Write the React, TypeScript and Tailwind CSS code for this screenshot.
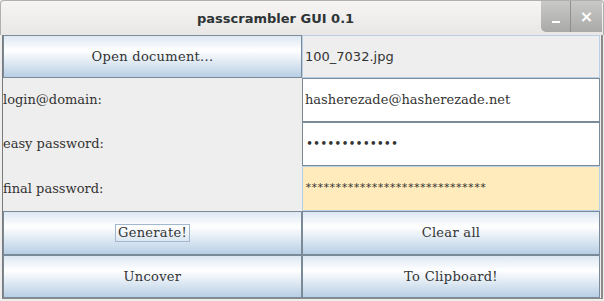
import React from "react";

const btn =
  "flex items-center justify-center border border-[#7a8a99] bg-[linear-gradient(to_bottom,#dde8f3_0%,#ffffff_35%,#b8cfe5_100%)] text-[#333] text-[13px] tracking-[0.3px]";

const App = () => {
  return (
    <div className="w-[604px] h-[301px] bg-[#eeeeee] overflow-hidden" style={{ fontFamily: "'DejaVu Serif', serif" }}>
      {/* title bar */}
      <div className="relative h-[35px] border border-[#b0b0b0] border-b-0 rounded-t-[4px] bg-[linear-gradient(to_bottom,#f6f5f4,#e8e7e6)] flex items-center pl-[196px]">
        <span className="text-[13px] font-bold text-[#2e3436] mt-[2px]" style={{ fontFamily: "'DejaVu Sans', sans-serif" }}>
          passcrambler GUI 0.1
        </span>
        <div className="absolute right-[1px] top-0 flex h-[31px] rounded-bl-[5px] overflow-hidden bg-[linear-gradient(to_bottom,#c9c9c7,#a9a9a7)]">
          <div className="w-[30px] flex items-end justify-center pb-[9px] border-r border-[#8f8f8d]">
            <div className="w-[8px] h-[2px] bg-white" />
          </div>
          <div className="w-[31px] flex items-center justify-center text-white text-[16px] font-bold" style={{ fontFamily: "'DejaVu Sans', sans-serif" }}>
            ×
          </div>
        </div>
      </div>

      {/* body */}
      <div className="ml-[2px] w-[601px] border-l border-l-[#7a7a7a] border-r-2 border-r-[#8a8a8a] border-b border-b-[#8a8a8a] pr-px">
        <div className="grid grid-cols-[299px_298px] grid-rows-[43px_44px_44px_45px_44px_43px]">
          <div className={btn}>Open document...</div>
          <div className="flex items-center border border-[#b8cfe5] bg-[#eeeeee] pl-[2px] text-[13px] text-[#333]" style={{ fontFamily: "'DejaVu Sans', sans-serif" }}>
            100_7032.jpg
          </div>

          <div className="flex items-center text-[13px] text-[#333]">login@domain:</div>
          <div className="flex items-center border border-[#7a8a99] bg-white pl-[2px] text-[13px] text-[#333]">
            hasherezade@hasherezade.net
          </div>

          <div className="flex items-center text-[13px] text-[#333]">easy password:</div>
          <div className="flex items-center border border-[#7a8a99] bg-white pl-[3px] text-[12px] text-[#333]">
            •••••••••••••
          </div>

          <div className="flex items-center text-[13px] text-[#333]">final password:</div>
          <div className="flex items-center border border-[#b8cfe5] bg-[#ffebbb] pl-[2px] text-[11px] text-[#333]" style={{ fontFamily: "'DejaVu Sans Mono', monospace" }}>
            <span className="tracking-[-0.6px]">******************************</span>
          </div>

          <div className={btn}>
            <span className="border border-[#a3b8cc] px-[2px] leading-[16px]">Generate!</span>
          </div>
          <div className={btn}>Clear all</div>

          <div className={btn}>Uncover</div>
          <div className={btn}>To Clipboard!</div>
        </div>
      </div>
    </div>
  );
};

export default App;
